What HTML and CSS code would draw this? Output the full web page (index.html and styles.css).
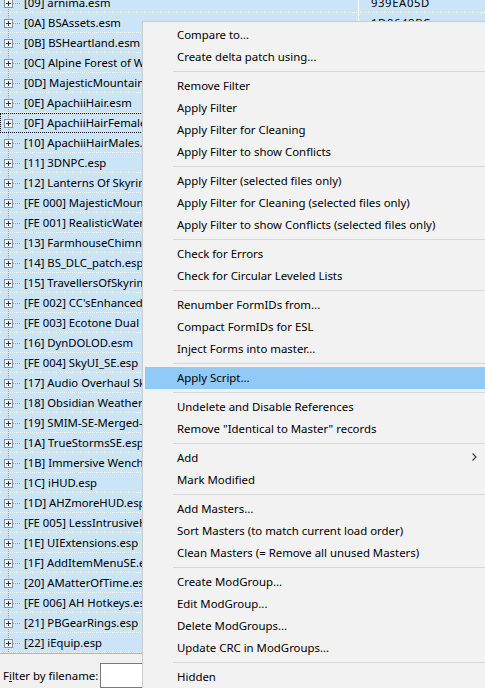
FILE: index.html
```html
<!DOCTYPE html>
<html>
<head>
<meta charset="utf-8">
<link rel="stylesheet" href="styles.css">
</head>
<body>
<svg class="defs" width="0" height="0">
  <symbol id="exp" viewBox="0 0 22 19">
    <line x1="8.5" y1="0" x2="8.5" y2="19" stroke="#a0a0a0" stroke-dasharray="1 1"/>
    <line x1="13" y1="10.5" x2="21" y2="10.5" stroke="#a0a0a0" stroke-dasharray="1 1"/>
    <rect x="4.5" y="6.5" width="8" height="8" fill="#f4f4f4" stroke="#8e8f8f"/>
    <line x1="6" y1="10.5" x2="11" y2="10.5" stroke="#1e395b"/>
    <line x1="8.5" y1="8" x2="8.5" y2="13" stroke="#1e395b"/>
  </symbol>
</svg>
<div class="app">
  <div class="tree">
    <div class="rows">
      <div class="row"><svg class="exp"><use href="#exp"/></svg><span class="name">[09] arnima.esm</span><span class="col2">939EA05D</span></div>
      <div class="row"><svg class="exp"><use href="#exp"/></svg><span class="name">[0A] BSAssets.esm</span><span class="col2">1D9648BC</span></div>
      <div class="row"><svg class="exp"><use href="#exp"/></svg><span class="name">[0B] BSHeartland.esm</span><span class="col2"></span></div>
      <div class="row"><svg class="exp"><use href="#exp"/></svg><span class="name">[0C] Alpine Forest of Wildflowers.esp</span><span class="col2"></span></div>
      <div class="row"><svg class="exp"><use href="#exp"/></svg><span class="name">[0D] MajesticMountains.esm</span><span class="col2"></span></div>
      <div class="row"><svg class="exp"><use href="#exp"/></svg><span class="name">[0E] ApachiiHair.esm</span><span class="col2"></span></div>
      <div class="row focus"><svg class="exp"><use href="#exp"/></svg><span class="name">[0F] ApachiiHairFemales.esm</span><span class="col2"></span></div>
      <div class="row"><svg class="exp"><use href="#exp"/></svg><span class="name">[10] ApachiiHairMales.esm</span><span class="col2"></span></div>
      <div class="row"><svg class="exp"><use href="#exp"/></svg><span class="name">[11] 3DNPC.esp</span><span class="col2"></span></div>
      <div class="row"><svg class="exp"><use href="#exp"/></svg><span class="name">[12] Lanterns Of Skyrim - All In One.esp</span><span class="col2"></span></div>
      <div class="row"><svg class="exp"><use href="#exp"/></svg><span class="name">[FE 000] MajesticMountains_Moss.esp</span><span class="col2"></span></div>
      <div class="row"><svg class="exp"><use href="#exp"/></svg><span class="name">[FE 001] RealisticWaterTwo.esp</span><span class="col2"></span></div>
      <div class="row"><svg class="exp"><use href="#exp"/></svg><span class="name">[13] FarmhouseChimneys.esp</span><span class="col2"></span></div>
      <div class="row"><svg class="exp"><use href="#exp"/></svg><span class="name">[14] BS_DLC_patch.esp</span><span class="col2"></span></div>
      <div class="row"><svg class="exp"><use href="#exp"/></svg><span class="name">[15] TravellersOfSkyrim.esp</span><span class="col2"></span></div>
      <div class="row"><svg class="exp"><use href="#exp"/></svg><span class="name">[FE 002] CC'sEnhancedBlood.esp</span><span class="col2"></span></div>
      <div class="row"><svg class="exp"><use href="#exp"/></svg><span class="name">[FE 003] Ecotone Dual Sheath.esp</span><span class="col2"></span></div>
      <div class="row"><svg class="exp"><use href="#exp"/></svg><span class="name">[16] DynDOLOD.esm</span><span class="col2"></span></div>
      <div class="row"><svg class="exp"><use href="#exp"/></svg><span class="name">[FE 004] SkyUI_SE.esp</span><span class="col2"></span></div>
      <div class="row"><svg class="exp"><use href="#exp"/></svg><span class="name">[17] Audio Overhaul Skyrim.esp</span><span class="col2"></span></div>
      <div class="row"><svg class="exp"><use href="#exp"/></svg><span class="name">[18] Obsidian Weathers.esp</span><span class="col2"></span></div>
      <div class="row"><svg class="exp"><use href="#exp"/></svg><span class="name">[19] SMIM-SE-Merged-All.esp</span><span class="col2"></span></div>
      <div class="row"><svg class="exp"><use href="#exp"/></svg><span class="name">[1A] TrueStormsSE.esp</span><span class="col2"></span></div>
      <div class="row"><svg class="exp"><use href="#exp"/></svg><span class="name">[1B] Immersive Wenches.esp</span><span class="col2"></span></div>
      <div class="row"><svg class="exp"><use href="#exp"/></svg><span class="name">[1C] iHUD.esp</span><span class="col2"></span></div>
      <div class="row"><svg class="exp"><use href="#exp"/></svg><span class="name">[1D] AHZmoreHUD.esp</span><span class="col2"></span></div>
      <div class="row"><svg class="exp"><use href="#exp"/></svg><span class="name">[FE 005] LessIntrusiveHUD.esp</span><span class="col2"></span></div>
      <div class="row"><svg class="exp"><use href="#exp"/></svg><span class="name">[1E] UIExtensions.esp</span><span class="col2"></span></div>
      <div class="row"><svg class="exp"><use href="#exp"/></svg><span class="name">[1F] AddItemMenuSE.esp</span><span class="col2"></span></div>
      <div class="row"><svg class="exp"><use href="#exp"/></svg><span class="name">[20] AMatterOfTime.esp</span><span class="col2"></span></div>
      <div class="row"><svg class="exp"><use href="#exp"/></svg><span class="name">[FE 006] AH Hotkeys.esp</span><span class="col2"></span></div>
      <div class="row"><svg class="exp"><use href="#exp"/></svg><span class="name">[21] PBGearRings.esp</span><span class="col2"></span></div>
      <div class="row"><svg class="exp"><use href="#exp"/></svg><span class="name">[22] iEquip.esp</span><span class="col2"></span></div>
    </div>
  </div>
  <div class="filter">
    <label class="flabel">F<u>i</u>lter by filename:</label>
    <span class="finput"></span>
  </div>
</div>

<div class="menu">
  <div class="item">Compare to...</div>
  <div class="item">Create delta patch using...</div>
  <div class="sep"></div>
  <div class="item">Remove Filter</div>
  <div class="item">Apply Filter</div>
  <div class="item">Apply Filter for Cleaning</div>
  <div class="item">Apply Filter to show Conflicts</div>
  <div class="sep"></div>
  <div class="item">Apply Filter (selected files only)</div>
  <div class="item">Apply Filter for Cleaning (selected files only)</div>
  <div class="item">Apply Filter to show Conflicts (selected files only)</div>
  <div class="sep"></div>
  <div class="item">Check for Errors</div>
  <div class="item">Check for Circular Leveled Lists</div>
  <div class="sep"></div>
  <div class="item">Renumber FormIDs from...</div>
  <div class="item">Compact FormIDs for ESL</div>
  <div class="item">Inject Forms into master...</div>
  <div class="sep"></div>
  <div class="item hot">Apply Script...</div>
  <div class="sep"></div>
  <div class="item">Undelete and Disable References</div>
  <div class="item">Remove "Identical to Master" records</div>
  <div class="sep"></div>
  <div class="item sub"><span class="lbl">Add</span><svg class="arrow" width="5" height="8" viewBox="0 0 5 8"><path d="M0.5 0.5 L4 4 L0.5 7.5" fill="none" stroke="#404040" stroke-width="1.2"/></svg></div>
  <div class="item">Mark Modified</div>
  <div class="sep"></div>
  <div class="item">Add Masters...</div>
  <div class="item">Sort Masters (to match current load order)</div>
  <div class="item">Clean Masters (= Remove all unused Masters)</div>
  <div class="sep"></div>
  <div class="item">Create ModGroup...</div>
  <div class="item">Edit ModGroup...</div>
  <div class="item">Delete ModGroups...</div>
  <div class="item">Update CRC in ModGroups...</div>
  <div class="sep"></div>
  <div class="item">Hidden</div>
</div>
</body>
</html>
```
FILE: styles.css
```css
html, body {
  margin: 0;
  padding: 0;
}
body {
  width: 485px;
  height: 688px;
  overflow: hidden;
  position: relative;
  background: #f0f0f0;
  font-family: "Noto Sans", "Open Sans", sans-serif;
  color: #000;
}
.defs {
  position: absolute;
  width: 0;
  height: 0;
}
.app {
  display: flex;
  flex-direction: column;
  height: 688px;
}
.tree {
  height: 653px;
  overflow: hidden;
  background: #cce4f7;
  flex: none;
}
.rows {
  margin-top: -7px;
}
.row {
  display: flex;
  align-items: center;
  height: 20px;
  box-sizing: border-box;
  border-bottom: 1px dotted #ffffff;
  font-size: 11.3px;
  white-space: nowrap;
}
.row.focus {
  outline: 1px dotted #000;
  outline-offset: -1px;
}
.exp {
  width: 22px;
  height: 19px;
  flex: none;
  align-self: flex-start;
}
.name {
  width: 336px;
  padding-left: 2px;
  box-sizing: border-box;
  overflow: hidden;
  flex: none;
}
.col2 {
  flex: 1;
  align-self: stretch;
  border-left: 1px solid #ffffff;
  padding-left: 12px;
  display: flex;
  align-items: center;
  letter-spacing: 0.6px;
}
.filter {
  flex: 1;
  border-top: 1px solid #b4b4b4;
  display: flex;
  align-items: center;
  padding: 0 0 0 3px;
  gap: 4px;
  font-size: 11.4px;
}
.flabel {
  width: 93px;
  white-space: nowrap;
  margin-top: 8px;
}
.finput {
  width: 60px;
  height: 25px;
  box-sizing: border-box;
  background: #fff;
  border: 1px solid #7a7a7a;
  margin-top: 8px;
}
.menu {
  position: absolute;
  left: 142px;
  top: 21px;
  width: 350px;
  padding: 2px;
  background: #f2f2f2;
  border: 1px solid #cccccc;
  font-size: 11.4px;
  box-shadow: 2px 2px 3px rgba(0,0,0,0.2);
}
.item {
  height: 22px;
  box-sizing: border-box;
  padding-bottom: 2px;
  display: flex;
  align-items: center;
  padding-left: 32px;
  white-space: nowrap;
}
.item.hot {
  background: #91c9f7;
}
.item.sub .lbl {
  flex: 1;
}
.arrow {
  margin-right: 18px;
}
.sep {
  height: 1px;
  margin: 3px 0 3px 28px;
  background: #d7d7d7;
}
```
